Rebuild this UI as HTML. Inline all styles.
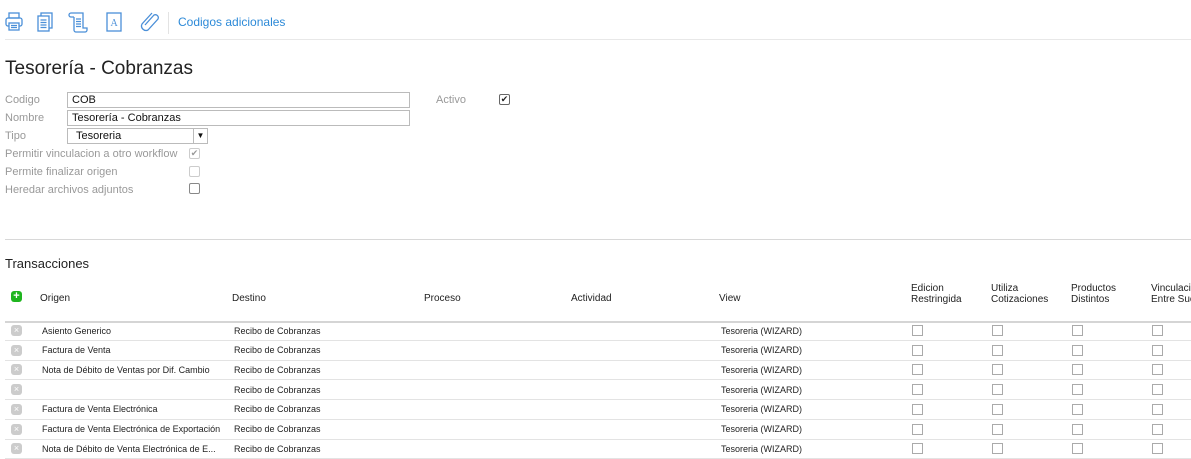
<!DOCTYPE html>
<html><head><meta charset="utf-8"><style>
body{margin:0;width:1191px;height:453px;overflow:hidden;background:#fff;font-family:"Liberation Sans",sans-serif;position:relative;color:#222}
.a{position:absolute;white-space:nowrap}
.lbl{font-size:11px;color:#999}
.inp{position:absolute;border:1px solid #bbb;height:14px;font-size:11px;line-height:14px;padding-left:4px;color:#111}
.cb{position:absolute;width:9px;height:9px;border:1px solid #999;border-radius:2px;background:#fff}
.h{font-size:10px;color:#222;line-height:11px}
.r{font-size:9px;color:#222}
.x{position:absolute;left:11px;width:11px;height:11px;border-radius:3px;background:#ccc;color:#fff;font-size:9px;line-height:11px;text-align:center}
.line{position:absolute;left:0;right:0;height:1px;background:#e3e3e3}
</style></head><body>
<svg class="a" style="left:0;top:0" width="170" height="40" viewBox="0 0 170 40" fill="none" stroke="#4a8fd8" stroke-width="1.3">
<rect x="9" y="13" width="10" height="5"/><rect x="6" y="18" width="16" height="8" rx="2"/><rect x="9" y="23" width="10" height="7" fill="#fff"/><path d="M11 25.5h6M11 27.5h6"/>
<rect x="41" y="13" width="11" height="15"/><rect x="38" y="16" width="11" height="15" fill="#fff"/><path d="M40.5 20h6M40.5 22.5h6M40.5 25h6M40.5 27.5h6"/>
<path d="M71 13h12v15h4v2a2 2 0 0 1-2 2h-9a2 2 0 0 1-2-2V17M71 13a2 2 0 0 0 0 4h3M76 19h5M76 21.5h5M76 24h5M76 26.5h5"/>
<rect x="107" y="13" width="14" height="18"/><text x="110.5" y="26" font-size="10" fill="#4a8fd8" stroke="none" font-family="Liberation Serif">A</text>
<path d="M145 25l9-10a3 3 0 0 1 4 4l-10 11a4.5 4.5 0 0 1-6-6l10-11"/>
</svg>
<div class="a" style="left:168px;top:12px;width:1px;height:22px;background:#e3e3e3"></div>
<div class="a" style="left:178px;top:15px;font-size:12px;color:#2d8ad8">Codigos adicionales</div>
<div class="line" style="top:39px;left:5px;background:#e8e8e8"></div>
<div class="a" style="left:5px;top:58px;font-size:19px;color:#222">Tesorería - Cobranzas</div>
<div class="a lbl" style="left:5px;top:94px">Codigo</div>
<div class="inp" style="left:67px;top:92px;width:337px">COB</div>
<div class="a lbl" style="left:436px;top:94px">Activo</div>
<div class="cb" style="left:499px;top:94px;border-color:#666;font-size:9px;line-height:9px;text-align:center">✔</div>
<div class="a lbl" style="left:5px;top:112px">Nombre</div>
<div class="inp" style="left:67px;top:110px;width:337px">Tesorería - Cobranzas</div>
<div class="a lbl" style="left:5px;top:130px">Tipo</div>
<div class="inp" style="left:67px;top:128px;width:131px;padding-left:8px">Tesoreria<span style="position:absolute;right:0;top:0;width:13px;height:14px;border-left:1px solid #bbb;font-size:8px;text-align:center">▼</span></div>
<div class="a lbl" style="left:5px;top:148px">Permitir vinculacion a otro workflow</div>
<div class="cb" style="left:189px;top:148px;border-color:#ccc;color:#999;font-size:9px;line-height:9px;text-align:center">✔</div>
<div class="a lbl" style="left:5px;top:166px">Permite finalizar origen</div>
<div class="cb" style="left:189px;top:166px;border-color:#ccc"></div>
<div class="a lbl" style="left:5px;top:184px">Heredar archivos adjuntos</div>
<div class="cb" style="left:189px;top:183px;border-color:#888"></div>
<div class="line" style="top:239px;left:5px;background:#d8d8d8"></div>
<div class="a" style="left:5px;top:256px;font-size:13px">Transacciones</div>
<div class="a" style="left:11px;top:291px;width:11px;height:11px;border-radius:3px;background:#1fb51f;color:#fff;font-size:11px;line-height:11px;text-align:center;font-weight:bold">+</div>
<div class="a h" style="left:40px;top:293px">Origen</div>
<div class="a h" style="left:232px;top:293px">Destino</div>
<div class="a h" style="left:424px;top:293px">Proceso</div>
<div class="a h" style="left:571px;top:293px">Actividad</div>
<div class="a h" style="left:719px;top:293px">View</div>
<div class="a h" style="left:911px;top:283px">Edicion<br>Restringida</div>
<div class="a h" style="left:991px;top:283px">Utiliza<br>Cotizaciones</div>
<div class="a h" style="left:1071px;top:283px">Productos<br>Distintos</div>
<div class="a h" style="left:1151px;top:283px">Vinculacion<br>Entre Sucursales</div>
<div class="line" style="top:321px;left:5px;height:2px;background:#d5d5d5"></div>
<div id="rows"></div>
<script>
var o=["Asiento Generico","Factura de Venta","Nota de Débito de Ventas por Dif. Cambio","","Factura de Venta Electrónica","Factura de Venta Electrónica de Exportación","Nota de Débito de Venta Electrónica de E..."];
var h="";for(var i=0;i<7;i++){var y=324+i*19.7;
h+='<div class="x" style="top:'+(y+1)+'px">×</div>';
h+='<div class="a r" style="left:42px;top:'+(y+1.5)+'px">'+o[i]+'</div>';
h+='<div class="a r" style="left:234px;top:'+(y+1.5)+'px">Recibo de Cobranzas</div>';
h+='<div class="a r" style="left:721px;top:'+(y+1.5)+'px">Tesoreria (WIZARD)</div>';
[912,992,1072,1152].forEach(function(x){h+='<div class="cb" style="left:'+x+'px;top:'+(y+1)+'px;border-radius:0;border-color:#aaa"></div>'});
h+='<div class="line" style="top:'+(y+16)+'px;left:5px"></div>';}
document.getElementById("rows").innerHTML=h;
</script>
</body></html>
